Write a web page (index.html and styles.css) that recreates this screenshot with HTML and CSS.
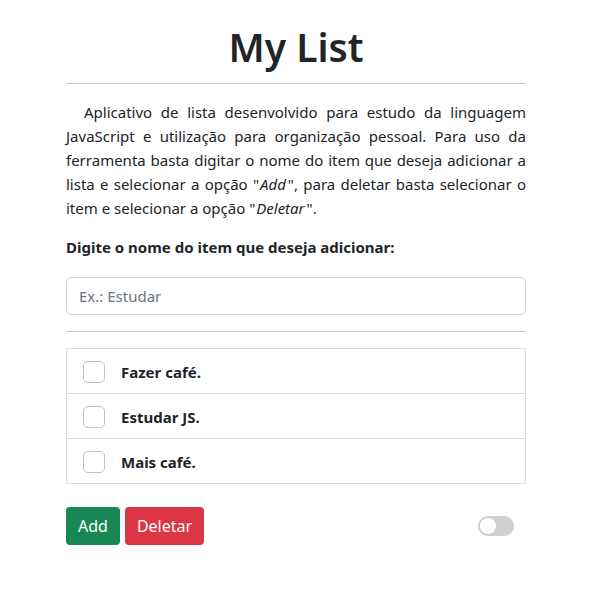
FILE: index.html
```html
<!DOCTYPE html>
<html lang="pt-BR">
<head>
<meta charset="utf-8">
<title>My List</title>
<link rel="stylesheet" href="styles.css">
</head>
<body>
<main class="container">
  <h1 class="title">My List</h1>
  <hr class="divider">
  <p class="intro">Aplicativo de lista desenvolvido para estudo da linguagem JavaScript e utilização para organização pessoal. Para uso da ferramenta basta digitar o nome do item que deseja adicionar a lista e selecionar a opção "<em>Add</em>", para deletar basta selecionar o item e selecionar a opção "<em>Deletar</em>".</p>
  <label class="label" for="item">Digite o nome do item que deseja adicionar:</label>
  <input class="input" id="item" type="text" placeholder="Ex.: Estudar">
  <hr class="divider divider-list">
  <ul class="list">
    <li class="row"><span class="check"></span><span class="name">Fazer café.</span></li>
    <li class="row"><span class="check"></span><span class="name">Estudar JS.</span></li>
    <li class="row"><span class="check"></span><span class="name">Mais café.</span></li>
  </ul>
  <div class="actions">
    <button class="btn btn-add">Add</button>
    <button class="btn btn-del">Deletar</button>
    <span class="toggle"><span class="knob"></span></span>
  </div>
</main>
</body>
</html>
```
FILE: styles.css
```css
* { box-sizing: border-box; }
body {
  margin: 0;
  background: #fff;
  color: #212529;
  font-family: "Noto Sans", "Open Sans", sans-serif;
  font-size: 16px;
  line-height: 24px;
}
.container {
  width: 460px;
  margin-left: 66px;
  padding-top: 21px;
}
.title {
  margin: 0;
  text-align: center;
  font-size: 39px;
  line-height: 51px;
  font-weight: 600;
}
.divider {
  margin: 11px 0 0;
  border: 0;
  border-top: 1px solid #c8c8c8;
}
.intro {
  margin: 16px 0 0;
  text-align: justify;
  text-indent: 18px;
  font-size: 15px;
}
.intro em {
  display: inline-block;
  text-indent: 0;
  padding: 0 2px 0 1px;
}
.label {
  display: block;
  margin-top: 15px;
  font-weight: 700;
  font-size: 15px;
}
.input {
  display: block;
  width: 100%;
  height: 38px;
  margin-top: 18px;
  padding: 6px 12px;
  border: 1px solid #ced4da;
  border-radius: 5px;
  font-family: inherit;
  font-size: 15px;
  color: #212529;
}
.input::placeholder { color: #6c757d; }
.divider-list { margin-top: 16px; }
.list {
  list-style: none;
  margin: 16px 0 0;
  padding: 0;
  border: 1px solid #dedede;
}
.row {
  display: flex;
  align-items: center;
  height: 45px;
  padding-left: 16px;
  padding-top: 2px;
  border-top: 1px solid #dedede;
}
.row:first-child { border-top: 0; height: 44px; }
.check {
  width: 22px;
  height: 22px;
  border: 1px solid #c0c0c0;
  border-radius: 5px;
  background: #fff;
}
.name {
  margin-left: 16px;
  font-weight: 700;
  font-size: 15px;
}
.actions {
  display: flex;
  align-items: center;
  gap: 5px;
  margin-top: 23px;
  padding-right: 12px;
}
.btn {
  height: 38px;
  padding: 0 12px;
  border: 0;
  border-radius: 4px;
  color: #fff;
  font-family: inherit;
  font-size: 16px;
}
.btn-add { background: #198754; }
.btn-del { background: #dc3545; }
.toggle {
  margin-left: auto;
  width: 36px;
  height: 20px;
  border-radius: 10px;
  background: #cfcfcf;
  display: flex;
  align-items: center;
  padding-left: 2px;
}
.knob {
  width: 16px;
  height: 16px;
  border-radius: 50%;
  background: #fff;
}
```
